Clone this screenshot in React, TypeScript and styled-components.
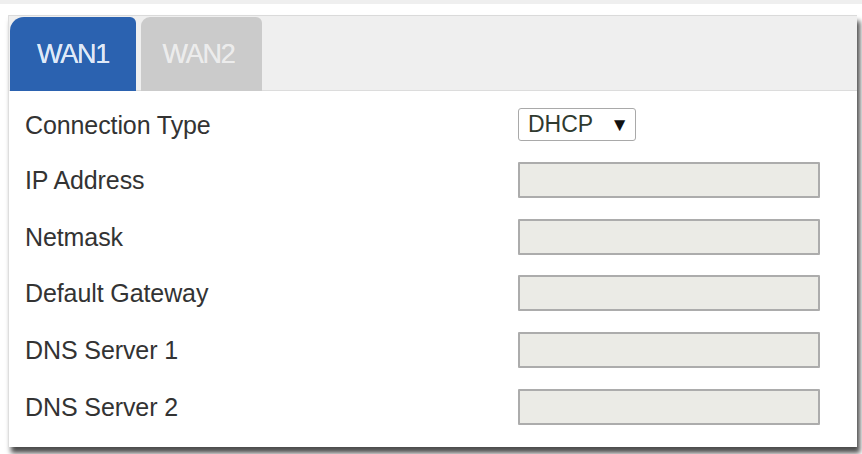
import React from "react";
import styled, { createGlobalStyle } from "styled-components";

const Global = createGlobalStyle`
  html, body { margin: 0; padding: 0; background: #ffffff; }
  body { font-family: "Liberation Sans", Arial, sans-serif; }
`;

const Page = styled.div`
  width: 862px;
  height: 454px;
  box-sizing: border-box;
  border-top: 4px solid #efefef;
  padding: 11px 5px 0 8px;
  overflow: hidden;
`;

const Panel = styled.div`
  width: 849px;
  height: 432px;
  box-sizing: border-box;
  background: #ffffff;
  border-left: 1px solid #dedede;
  box-shadow: 3px 6px 5px rgba(0, 0, 0, 0.7);
  display: flex;
  flex-direction: column;
`;

const TabStrip = styled.div`
  display: flex;
  align-items: flex-end;
  gap: 5px;
  height: 76px;
  box-sizing: border-box;
  padding: 2px 0 0 1px;
  background: #efefef;
  border-top: 1px solid #dadada;
  border-bottom: 1px solid #dcdcdc;
`;

const Tab = styled.div<{ $active?: boolean }>`
  height: 74px;
  margin-bottom: -1px;
  width: ${(p) => (p.$active ? "126px" : "121px")};
  display: flex;
  align-items: center;
  justify-content: center;
  box-sizing: border-box;
  padding-right: ${(p) => (p.$active ? "0" : "6px")};
  font-size: 27px;
  letter-spacing: -1.2px;
  background: ${(p) => (p.$active ? "#2b62b0" : "#cbcbcb")};
  color: ${(p) => (p.$active ? "#dfe9f8" : "#ececec")};
  text-shadow: 0 0 0.6px ${(p) => (p.$active ? "#dfe9f8" : "#ececec")};
  border-radius: ${(p) => (p.$active ? "14px 6px 0 0" : "9px 6px 0 0")};
`;

const Form = styled.div`
  display: grid;
  grid-template-columns: 493px 302px;
  row-gap: 20.75px;
  align-items: center;
  padding: 17px 0 0 16px;
`;

const Label = styled.div`
  font-size: 25px;
  color: #333333;
  line-height: 28px;
  letter-spacing: -0.1px;
`;

const Select = styled.div`
  width: 118px;
  height: 33px;
  box-sizing: border-box;
  border: 1px solid #a9a9a9;
  border-radius: 3px;
  display: flex;
  align-items: center;
  padding-left: 9px;
  gap: 17px;
  font-size: 23px;
  color: #2f3a2f;
  background: #fff;
`;

const Arrow = styled.span`
  font-size: 19px;
  color: #111;
`;

const Input = styled.div`
  width: 302px;
  height: 36px;
  box-sizing: border-box;
  border: 2px solid #acacac;
  border-radius: 1px;
  background: #ebebe6;
`;

const fields = ["IP Address", "Netmask", "Default Gateway", "DNS Server 1", "DNS Server 2"];

export default function App() {
  return (
    <>
      <Global />
      <Page>
        <Panel>
          <TabStrip>
            <Tab $active>WAN1</Tab>
            <Tab>WAN2</Tab>
          </TabStrip>
          <Form>
            <Label>Connection Type</Label>
            <Select>
              <span>DHCP</span>
              <Arrow>▼</Arrow>
            </Select>
            {fields.map((f) => (
              <React.Fragment key={f}>
                <Label>{f}</Label>
                <Input />
              </React.Fragment>
            ))}
          </Form>
        </Panel>
      </Page>
    </>
  );
}
